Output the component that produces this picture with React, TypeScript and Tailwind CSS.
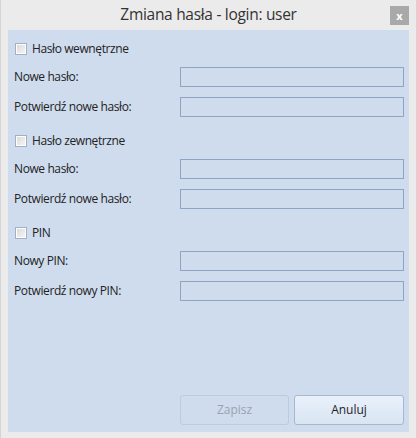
const Check = ({ label }: { label: string }) => (
  <div className="flex h-[20px] items-center">
    <div className="ml-[7px] h-[12px] w-[12px] border border-[#9fb0c8] bg-white p-px">
      <div className="h-full w-full bg-gradient-to-br from-[#dcdcdc] to-[#f4f4f4]" />
    </div>
    <span className="ml-[5px] text-[12px] tracking-[-0.4px] text-[#222]">{label}</span>
  </div>
);

const Field = ({ label }: { label: string }) => (
  <div className="flex h-[20px] items-center">
    <span className="ml-[6px] flex-1 text-[12px] tracking-[-0.4px] text-[#222]">{label}</span>
    <div className="mr-[5px] h-[20px] w-[224px] border border-[#8da4c4]" />
  </div>
);

const Section = ({ title, a, b }: { title: string; a: string; b: string }) => (
  <div className="flex flex-col">
    <Check label={title} />
    <div className="mt-[8px] flex flex-col gap-[10px]">
      <Field label={a} />
      <Field label={b} />
    </div>
  </div>
);

export default function App() {
  return (
    <div
      className="flex h-[438px] w-[417px] flex-col border-x border-[#d4d4d4] bg-[#ebebeb]"
      style={{ fontFamily: '"Open Sans", "Noto Sans", sans-serif' }}
    >
      <div className="relative flex h-[30px] items-center justify-center">
        <span className="text-[15.5px] tracking-[-0.3px] text-[#333]">Zmiana hasła - login: user</span>
        <div className="absolute right-[7px] top-[6px] flex h-[19px] w-[19px] items-center justify-center bg-[#a9a9a9] text-[11px] font-bold leading-none text-white">
          x
        </div>
      </div>
      <div className="mx-[7px] mb-[6px] flex flex-1 flex-col bg-[#cfdcee] pt-[9px]">
        <div className="flex flex-col gap-[14px]">
          <Section title="Hasło wewnętrzne" a="Nowe hasło:" b="Potwierdź nowe hasło:" />
          <Section title="Hasło zewnętrzne" a="Nowe hasło:" b="Potwierdź nowe hasło:" />
          <Section title="PIN" a="Nowy PIN:" b="Potwierdź nowy PIN:" />
        </div>
        <div className="mt-auto mb-[7px] mr-[5px] flex justify-end gap-[5px]">
          <button className="h-[30px] w-[109px] rounded-[3px] border border-[#bccbdf] text-[12px] text-[#9aa3ae]">
            Zapisz
          </button>
          <button className="h-[30px] w-[110px] rounded-[3px] border border-[#a7b7cd] bg-gradient-to-b from-[#e9f1fb] to-[#d9e5f3] text-[12px] text-[#1e1e1e]">
            Anuluj
          </button>
        </div>
      </div>
    </div>
  );
}
